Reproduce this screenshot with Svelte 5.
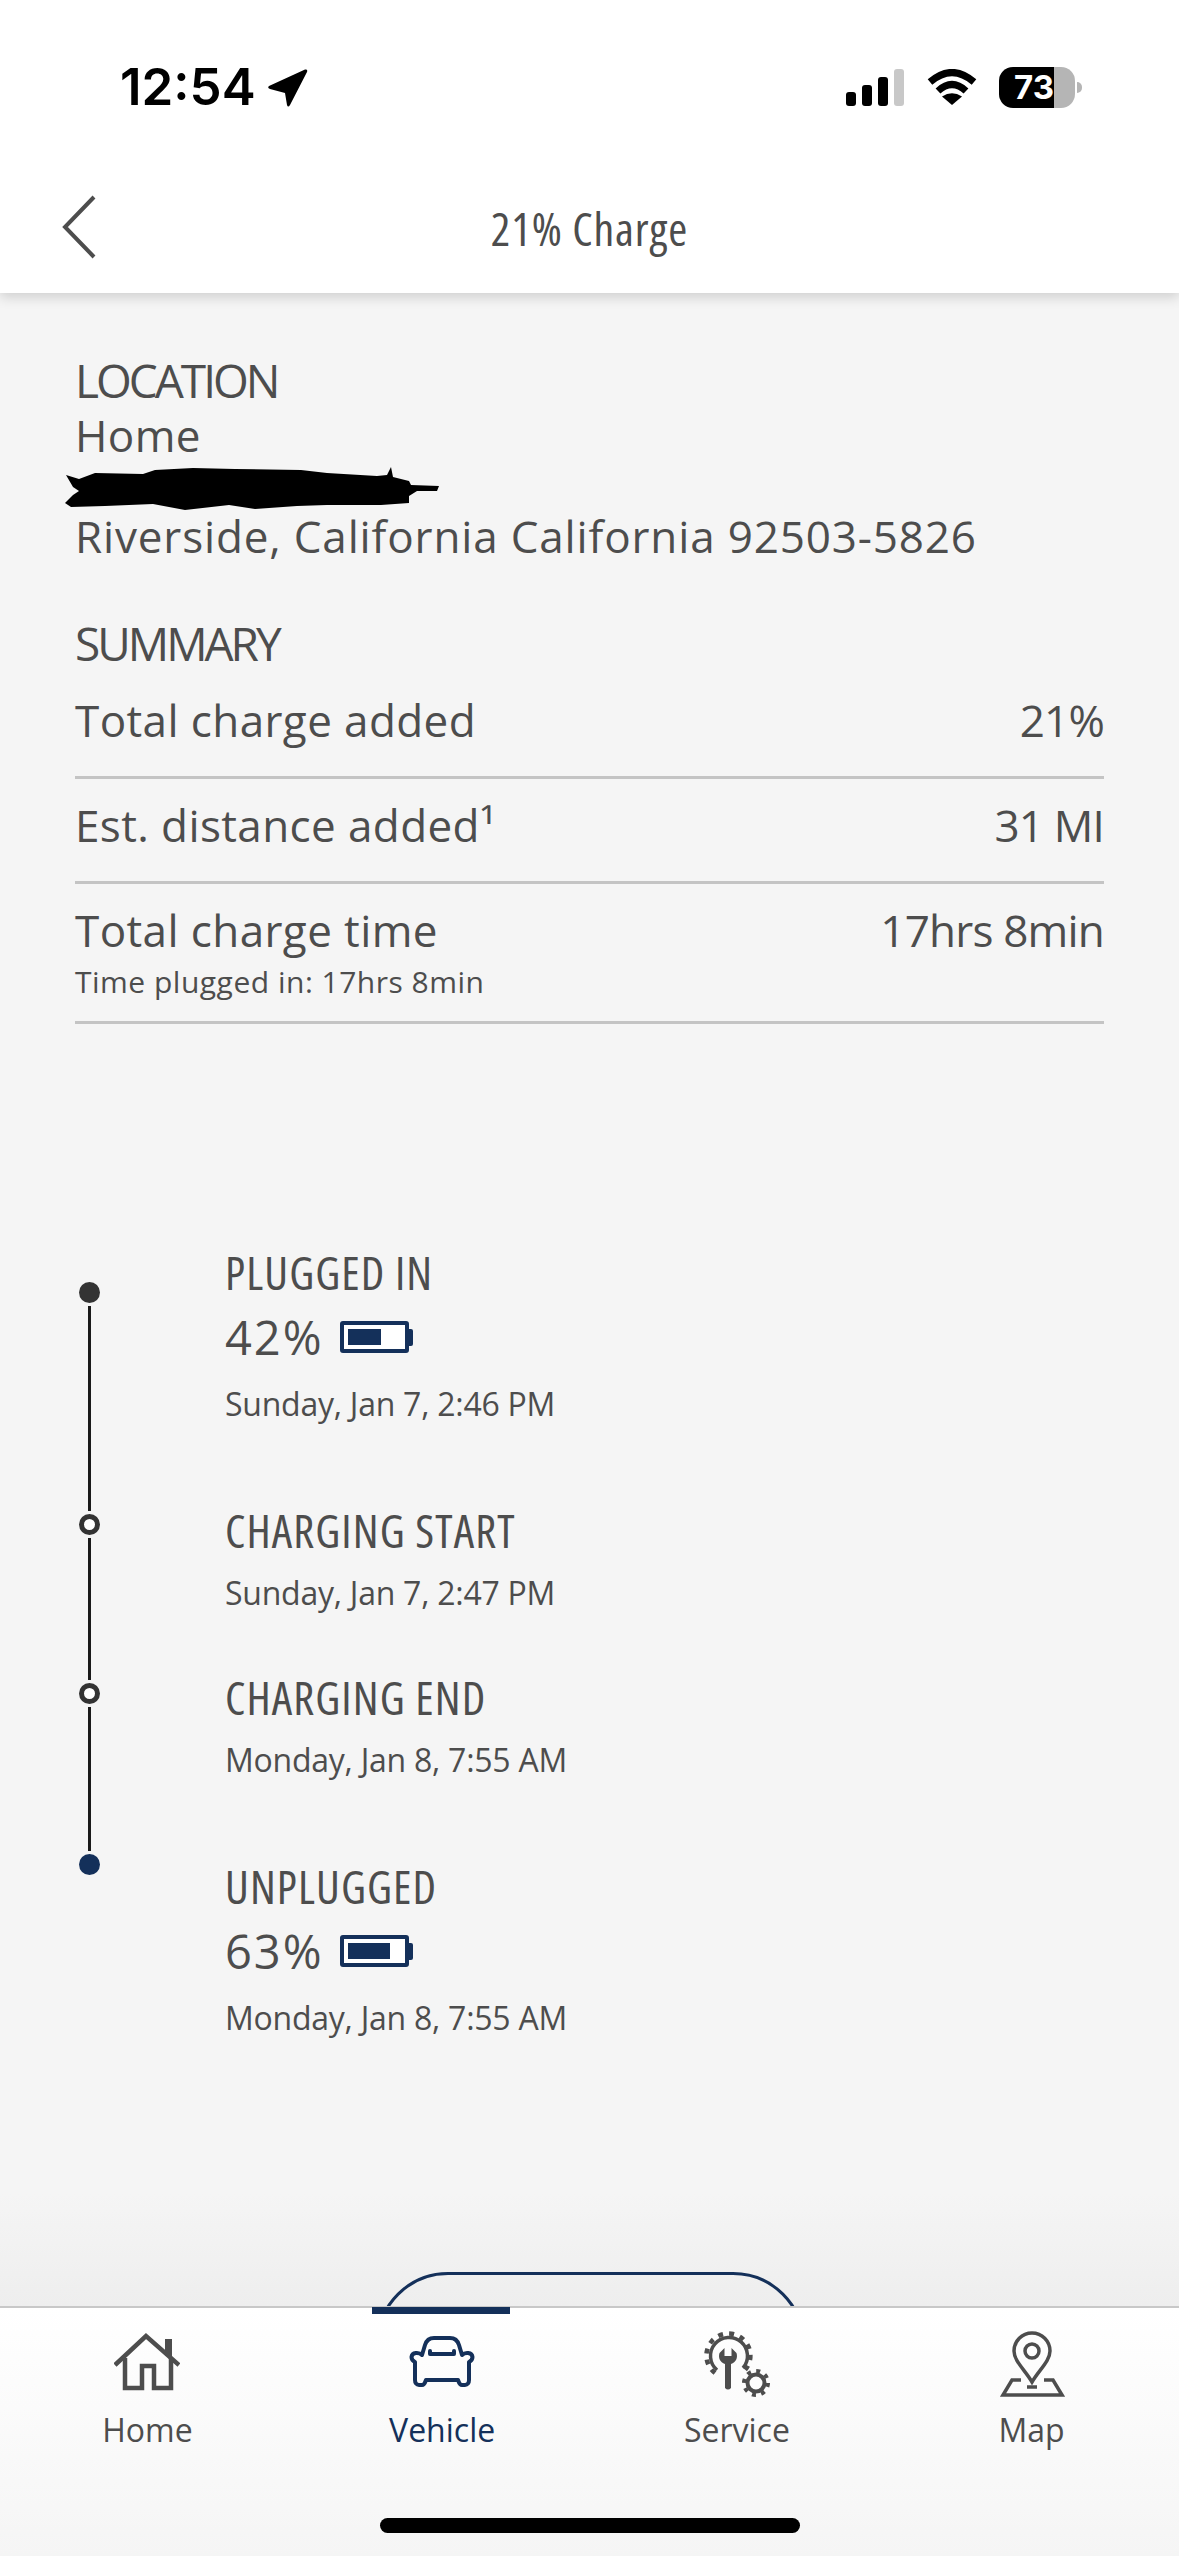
<script>
    const rows = [
        { label: "Total charge added", value: "21%" },
        { label: "Est. distance added¹", value: "31 MI" },
        { label: "Total charge time", value: "17hrs 8min", note: "Time plugged in: 17hrs 8min" }
    ];

    const stops = [
        { kind: "solid", next: 205 },
        { kind: "ring", next: 142 },
        { kind: "ring", next: 144 },
        { kind: "end" }
    ];

    const events = [
        { title: "PLUGGED IN", pct: 42, fill: 33, date: "Sunday, Jan 7, 2:46 PM" },
        { title: "CHARGING START", date: "Sunday, Jan 7, 2:47 PM", gap: "wide" },
        { title: "CHARGING END", date: "Monday, Jan 8, 7:55 AM", gap: "tight" },
        { title: "UNPLUGGED", pct: 63, fill: 42, date: "Monday, Jan 8, 7:55 AM", gap: "wide" }
    ];
</script>

<div class="page">
    <div class="top">
        <div class="status">
            <div class="clock">
                <span>12:54</span>
                <svg width="40" height="38" viewBox="0 0 40 38"><path d="M37 .5 1 17q-2 2 1 3l15 4 2 12q1 3 3 0L39 3q1-3-2-2.500Z" fill="#000"/></svg>
            </div>
            <div class="indicators">
                <div class="bars">
                    <i style="height: 14px"></i>
                    <i style="height: 21px"></i>
                    <i style="height: 29px"></i>
                    <i class="off" style="height: 37px"></i>
                </div>
                <svg width="50" height="36" viewBox="0 0 50 36">
                    <path d="M3 13Q25-6 47 13M11 22Q25 9 39 22" fill="none" stroke="#000" stroke-width="7"/>
                    <path d="M25 36 15 27.500Q25 21 35 27.500Z" fill="#000"/>
                </svg>
                <div class="phone-battery"><span>73</span></div>
                <div class="nub"></div>
            </div>
        </div>
        <div class="titlebar">
            <svg class="back" width="34" height="64" viewBox="0 0 34 64"><path d="M32 2 3 32l29 30" fill="none" stroke="#4d4d4d" stroke-width="4"/></svg>
            <h1>21% Charge</h1>
        </div>
    </div>

    <main>
        <h2>LOCATION</h2>
        <div class="text home">Home</div>
        <svg class="scribble" width="376" height="44" viewBox="0 0 376 44">
            <path d="M1 8 14 12 30 6 78 7 90 3 128 1 170 2 236 3 262 6 312 9 322 8 326 0 328 10 344 14 346 18 374 19 372 24 352 24 344 29 344 36 316 38 262 38 232 39 190 42 164 38 120 43 88 37 40 39 6 40 0 36 8 28 14 24 8 20Z" fill="#000"/>
        </svg>
        <div class="text address">Riverside, California California 92503-5826</div>

        <h2 class="summary">SUMMARY</h2>
        {#each rows as row}
            <div class="row" class:with-note={row.note}>
                <div class="row-main">
                    <span class="text">{row.label}</span>
                    <span class="text value">{row.value}</span>
                </div>
                {#if row.note}
                    <div class="note">{row.note}</div>
                {/if}
            </div>
        {/each}

        <div class="timeline">
            <div class="rail">
                {#each stops as stop}
                    <div class="dot {stop.kind}"></div>
                    {#if stop.next}
                        <div class="seg" style="height: {stop.next}px"></div>
                    {/if}
                {/each}
            </div>
            <div class="events">
                {#each events as ev}
                    <div class="event {ev.gap || ''}">
                        <h3>{ev.title}</h3>
                        {#if ev.pct}
                            <div class="level">
                                <span class="text pct">{ev.pct}%</span>
                                <div class="batt"><div class="batt-fill" style="width: {ev.fill}px"></div></div>
                                <div class="batt-nub"></div>
                            </div>
                        {/if}
                        <div class="date" class:after-level={ev.pct}>{ev.date}</div>
                    </div>
                {/each}
            </div>
        </div>
        <div class="pill"></div>
    </main>

    <nav>
        <div class="active-bar"></div>
        <div class="tab">
            <svg width="66" height="66" viewBox="0 0 66 66">
                <path d="M1 34 32 5l33 29" fill="none" stroke="#4d4d4d" stroke-width="4.500"/>
                <path d="M51 8h7v17h-7z" fill="#4d4d4d"/>
                <path d="M11 27v30h17V35h12v22h17V27" fill="none" stroke="#4d4d4d" stroke-width="4.500"/>
            </svg>
            <span>Home</span>
        </div>
        <div class="tab current">
            <svg width="66" height="66" viewBox="0 0 66 66">
                <g fill="none" stroke="#14305a" stroke-width="4" stroke-linejoin="round" stroke-linecap="round">
                    <path d="M13 24 16 14C17.500 9 20 7 25 7H41C46 7 48.500 9 50 14L53 24C56 21 63 21 63.500 26 63.500 29 62 30 60 31V49C60 52 58.500 54 56 54H53C51 54 50 52 49 49H17C16 52 15 54 13 54H10C7.500 54 6 52 6 49V31C4 30 2.500 29 2.500 26 3 21 10 21 13 24Z"/>
                    <path d="M21 20V23H45V20"/>
                </g>
            </svg>
            <span>Vehicle</span>
        </div>
        <div class="tab">
            <svg width="66" height="66" viewBox="0 0 66 66">
                <g fill="none" stroke="#4d4d4d">
                    <path d="M13 39A18.500 18.500 0 1 1 39 37" stroke-width="3.500"/>
                    <path d="M11 42A22 22 0 1 1 41 39" stroke-width="4.500" stroke-dasharray="5 6"/>
                    <circle cx="52" cy="52" r="8.500" stroke-width="4"/>
                    <circle cx="52" cy="52" r="12" stroke-width="4" stroke-dasharray="4 5.400"/>
                </g>
                <path d="M21 57V33C16 31 14 27 15.500 22L20.500 17V25H27.500V17L32.500 22C34 27 32 31 27 33V57Q24 60 21 57Z" fill="#4d4d4d"/>
            </svg>
            <span>Service</span>
        </div>
        <div class="tab">
            <svg width="66" height="66" viewBox="0 0 66 66">
                <g fill="none" stroke="#4d4d4d" stroke-width="3.500">
                    <path d="M33 51C26 39 15 30 15 20A18 18 0 0 1 51 20C51 30 40 39 33 51Z"/>
                    <circle cx="33" cy="20" r="7"/>
                    <path d="M22 49H13L4 64H63L54 49H45"/>
                    <path d="M28 56H38"/>
                </g>
            </svg>
            <span>Map</span>
        </div>
        <div class="home-bar"></div>
    </nav>
</div>

<style>
    :global(body) {
        margin: 0;
        background: #f5f5f5;
    }

    .page {
        width: 1179px;
        height: 2556px;
        display: flex;
        flex-direction: column;
        overflow: hidden;
        color: #4d4d4d;
        font-family: "Open Sans", sans-serif;
        font-stretch: 88%;
    }

    .top {
        height: 293px;
        flex: none;
        background: #fff;
        box-shadow: 0 4px 12px rgba(0, 0, 0, 0.16);
        position: relative;
        z-index: 2;
    }

    .status {
        height: 174px;
        display: flex;
        justify-content: space-between;
        box-sizing: border-box;
        padding: 67px 97px 0 120px;
    }

    .clock {
        display: flex;
        gap: 12px;
        height: 40px;
        color: #000;
        font: 600 51px/40px Inter, sans-serif;
    }

    .clock svg {
        margin-top: 2px;
    }

    .indicators {
        display: flex;
        height: 41px;
    }

    .bars {
        display: flex;
        align-items: flex-end;
        gap: 6px;
        height: 37px;
        margin: 2px 23px 0 0;
    }

    .bars i {
        width: 10px;
        border-radius: 3px;
        background: #000;
    }

    .bars i.off {
        background: #c8c8c8;
    }

    .indicators > svg {
        margin: 2px 22px 0 0;
    }

    .phone-battery {
        width: 76px;
        height: 41px;
        border-radius: 14px;
        background: linear-gradient(90deg, #000 55px, #b5b5b5 55px);
        box-sizing: border-box;
        padding-left: 15px;
        color: #fff;
        font: 700 33px/41px Inter, sans-serif;
    }

    .nub {
        width: 5px;
        height: 11px;
        margin: 15px 0 0 2px;
        background: #b5b5b5;
        border-radius: 0 5px 5px 0;
    }

    .titlebar {
        display: flex;
        justify-content: center;
        position: relative;
    }

    .back {
        position: absolute;
        left: 62px;
        top: 21px;
    }

    h1 {
        margin: 26px 0 0;
        font: 400 46px/56px "Open Sans", sans-serif;
        font-stretch: 75%;
        letter-spacing: 0.9px;
    }

    main {
        flex: 1;
        box-sizing: border-box;
        padding: 64px 75px 0;
        position: relative;
        background: linear-gradient(#f5f5f5 1900px, #eee);
    }

    h2,
    h3 {
        margin: 0;
        font-weight: 400;
    }

    h2 {
        font-size: 46px;
        line-height: 46px;
        letter-spacing: -3px;
    }

    h3 {
        font-size: 46px;
        line-height: 44px;
        font-stretch: 75%;
        letter-spacing: 1.1px;
    }

    .text {
        font-size: 44px;
        line-height: 44px;
        letter-spacing: 0.4px;
    }

    .address {
        letter-spacing: 0.85px;
    }

    .value {
        letter-spacing: -0.8px;
    }

    .home {
        margin-top: 10px;
    }

    .scribble {
        display: block;
        margin: 10px 0 3px -10px;
    }

    .summary {
        margin: 62px 0 32px;
    }

    .row {
        border-bottom: 3px solid #c4c4c4;
        padding-bottom: 34px;
        margin-bottom: 24px;
    }

    .row.with-note {
        padding-bottom: 24px;
        margin-bottom: 0;
    }

    .row-main {
        display: flex;
        justify-content: space-between;
    }

    .note {
        margin-top: 15px;
        font-size: 30px;
        line-height: 30px;
        letter-spacing: 0.5px;
    }

    .timeline {
        display: flex;
        margin-top: 226px;
    }

    .rail {
        width: 21px;
        margin: 32px 125px 0 4px;
        display: flex;
        flex-direction: column;
        align-items: center;
        flex: none;
    }

    .dot {
        width: 21px;
        height: 21px;
        border-radius: 50%;
        box-sizing: border-box;
        flex: none;
    }

    .dot.solid {
        background: #333;
    }

    .dot.ring {
        background: #fff;
        border: 5px solid #333;
    }

    .dot.end {
        background: #14305a;
    }

    .seg {
        width: 3px;
        margin: 3px 0;
        background: #1a1a1a;
    }

    .event.wide {
        margin-top: 88px;
    }

    .event.tight {
        margin-top: 66px;
    }

    .level {
        display: flex;
        align-items: center;
        margin-top: 21px;
    }

    .pct {
        font-size: 47px;
        letter-spacing: 2px;
    }

    .batt {
        width: 69px;
        height: 32px;
        margin-left: 16px;
        box-sizing: border-box;
        border: 4px solid #14305a;
        border-radius: 3px;
        background: #fff;
        padding: 4px;
    }

    .batt-fill {
        height: 100%;
        background: #14305a;
    }

    .batt-nub {
        width: 4px;
        height: 17px;
        background: #14305a;
        border-radius: 0 2px 2px 0;
    }

    .date {
        margin-top: 25px;
        font-size: 32px;
        line-height: 32px;
        letter-spacing: -0.25px;
    }

    .date.after-level {
        margin-top: 29px;
    }

    .pill {
        position: absolute;
        left: 376px;
        top: 1979px;
        width: 429px;
        height: 160px;
        box-sizing: border-box;
        border: 3px solid #14305a;
        border-radius: 72px;
    }

    nav {
        height: 250px;
        flex: none;
        position: relative;
        z-index: 1;
        display: grid;
        grid-template-columns: repeat(4, 1fr);
        border-top: 2px solid #c8c8c8;
        box-sizing: border-box;
        background: linear-gradient(#fff, #f5f5f5);
    }

    .active-bar {
        position: absolute;
        left: 372px;
        top: -1px;
        width: 138px;
        height: 7px;
        background: #14305a;
    }

    .tab {
        display: flex;
        flex-direction: column;
        align-items: center;
        padding-top: 23px;
        font-size: 32px;
        line-height: 40px;
    }

    .tab svg {
        margin-bottom: 13px;
    }

    .tab.current {
        color: #14305a;
    }

    .home-bar {
        position: absolute;
        left: 380px;
        top: 210px;
        width: 420px;
        height: 15px;
        border-radius: 8px;
        background: #000;
    }
</style>
